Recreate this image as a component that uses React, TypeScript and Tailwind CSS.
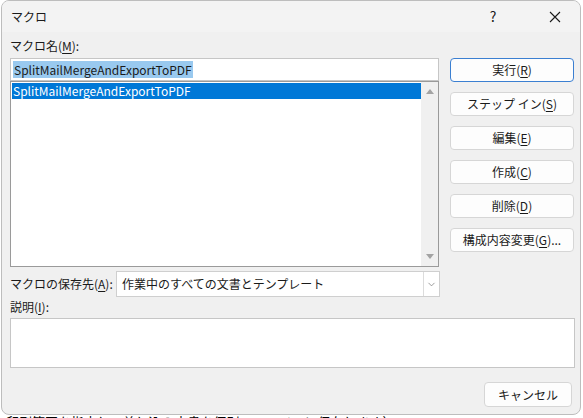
import { ChevronDown } from "lucide-react";

const font = { fontFamily: '"Noto Sans CJK JP", "Noto Sans", sans-serif' };

function Btn({ children, primary }: { children: React.ReactNode; primary?: boolean }) {
  return (
    <div
      className={
        "h-[24px] w-[124px] rounded-[4px] flex items-center justify-center text-[12px] text-[#1a1a1a] bg-[#fdfdfd] " +
        (primary ? "border border-[#3b7fd1]" : "border border-[#d6d6d6]")
      }
    >
      {children}
    </div>
  );
}

function U({ children }: { children: React.ReactNode }) {
  return <span className="underline underline-offset-2">{children}</span>;
}

export default function App() {
  return (
    <div className="w-[583px] h-[418px] bg-white overflow-hidden" style={font}>
      <div className="ml-[1px] w-[580px] h-[415px] rounded-[8px] border border-[#bdbdbd] bg-[#f0f0f0] flex flex-col overflow-hidden">
        {/* title bar */}
        <div className="h-[31px] shrink-0 bg-[#f3f3f3] flex items-center pl-[9px] text-[12px] text-[#1a1a1a]">
          <span className="flex-1">マクロ</span>
          <span className="w-[20px] text-center text-[14px] mr-[46px]">?</span>
          <svg width="12" height="12" viewBox="0 0 12 12" className="mr-[19px]">
            <path d="M1 1L11 11M11 1L1 11" stroke="#1a1a1a" strokeWidth="1.1" />
          </svg>
        </div>

        {/* body */}
        <div className="flex-1 pl-[8px] pr-[6px] flex flex-col">
          <div className="flex gap-[11px]">
            <div className="w-[430px] flex flex-col">
              <div className="h-[26px] pt-[6px] text-[12px] text-[#1a1a1a] leading-[16px]">
                マクロ名(<U>M</U>):
              </div>
              <div className="h-[23px] bg-white border border-[#c6c6c6] flex items-center pl-[2px]">
                <span className="bg-[#99c9ef] text-[12px] leading-[17px] text-[#1a1a1a] px-[1px]">
                  SplitMailMergeAndExportToPDF
                </span>
              </div>
              <div className="h-[186px] bg-white border border-[#9a9a9a] flex">
                <div className="flex-1 pt-[1px] pl-[1px]">
                  <div className="h-[16px] bg-[#0078d7] text-white text-[12px] leading-[16px] pl-[1px]">
                    SplitMailMergeAndExportToPDF
                  </div>
                </div>
                <div className="w-[17px] bg-[#f0f0f0] flex flex-col items-center justify-between py-[7px]">
                  <svg width="8" height="5" viewBox="0 0 8 5">
                    <path d="M0 5L4 0L8 5Z" fill="#a3a3a3" />
                  </svg>
                  <svg width="8" height="5" viewBox="0 0 8 5">
                    <path d="M0 0L4 5L8 0Z" fill="#a3a3a3" />
                  </svg>
                </div>
              </div>
            </div>
            <div className="flex flex-col gap-[10px] pt-[26px]">
              <Btn primary>
                実行(<U>R</U>)
              </Btn>
              <Btn>
                ステップ イン(<U>S</U>)
              </Btn>
              <Btn>
                編集(<U>E</U>)
              </Btn>
              <Btn>
                作成(<U>C</U>)
              </Btn>
              <Btn>
                削除(<U>D</U>)
              </Btn>
              <Btn>
                構成内容変更(<U>G</U>)...
              </Btn>
            </div>
          </div>

          <div className="w-[430px] flex items-center mt-[4px]">
            <div className="w-[106px] text-[12px] text-[#1a1a1a]">
              マクロの保存先(<U>A</U>):
            </div>
            <div className="flex-1 h-[26px] bg-white border border-[#cfcfcf] flex items-center">
              <span className="flex-1 pl-[5px] text-[12px] text-[#1a1a1a]">
                作業中のすべての文書とテンプレート
              </span>
              <div className="w-[16px] h-full border-l border-[#dcdcdc] flex items-center justify-center">
                <ChevronDown size={11} strokeWidth={1.5} className="text-[#707070]" />
              </div>
            </div>
          </div>

          <div className="h-[21px] pt-[2px] text-[12px] text-[#1a1a1a] leading-[16px]">
            説明(<U>I</U>):
          </div>
          <div className="w-[565px] h-[50px] bg-white border border-[#c6c6c6]" />

          <div className="flex justify-end mt-[14px] pr-[2px]">
            <div className="h-[25px] w-[88px] rounded-[4px] border border-[#d6d6d6] bg-[#fdfdfd] flex items-center justify-center text-[12px] text-[#1a1a1a]">
              キャンセル
            </div>
          </div>
        </div>
      </div>
      {/* document text peeking out under the dialog */}
      <div className="h-[3px] overflow-hidden pl-[6px]">
        <div className="text-[13px] leading-[13px] text-black whitespace-nowrap">
          印刷範囲を指定して差し込み文書を個別のファイルに保存します）
        </div>
      </div>
    </div>
  );
}
